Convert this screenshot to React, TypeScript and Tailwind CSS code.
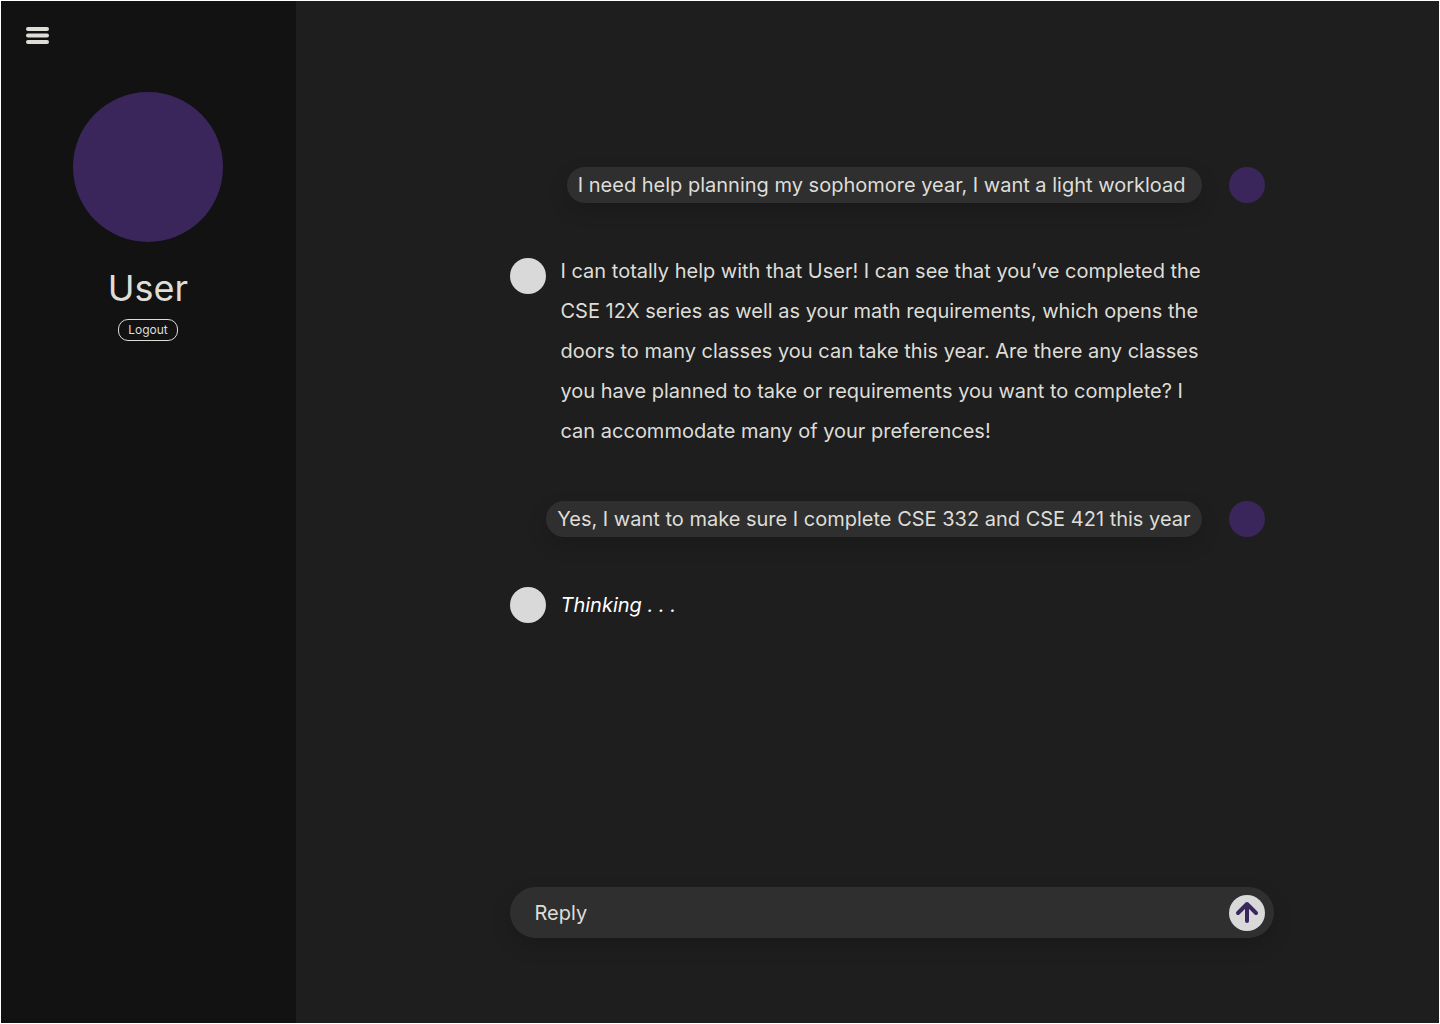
import React from "react";

const Avatar = ({ className }: { className: string }) => {
  return <div className={`h-9 w-9 shrink-0 rounded-full ${className}`} />;
};

const Sidebar = () => {
  return (
    <aside className="flex w-[295px] shrink-0 flex-col bg-[#121212] pr-px text-[#deddd8]">
      <button aria-label="Menu" className="mt-6 ml-6 h-6 w-6">
        <svg viewBox="0 0 24 24" className="h-6 w-6" fill="none" stroke="currentColor" strokeWidth="4" strokeLinecap="round">
          <path d="M3 4h19M3 10.5h19M3 17h19" />
        </svg>
      </button>
      <div className="mt-[43px] flex flex-col items-center">
        <div className="h-[150px] w-[150px] rounded-full bg-[#3a265a]" />
        <h1 className="mt-6 text-4xl leading-11">User</h1>
        <button className="mt-[9px] h-[22px] rounded-[10px] border border-[#deddd8] px-[9px] text-xs">
          Logout
        </button>
      </div>
    </aside>
  );
};

const UserMessage = ({ text, className }: { text: string; className: string }) => {
  return (
    <div className="flex w-full items-center justify-end gap-[27px] pr-[9px]">
      <p className={`rounded-full bg-[#2f2f2f] py-1 leading-7 shadow-[0_8px_20px_rgba(0,0,0,0.15)] ${className}`}>
        {text}
      </p>
      <Avatar className="bg-[#3a265a]" />
    </div>
  );
};

const ReplyForm = () => {
  return (
    <form className="flex h-[51px] w-full items-center rounded-full bg-[#2f2f2f] pr-[9px] pl-[25px] shadow-[0_8px_20px_rgba(0,0,0,0.15)]">
      <input
        type="text"
        aria-label="Reply"
        placeholder="Reply"
        className="min-w-0 flex-1 bg-transparent outline-none placeholder:text-[#deddd8]"
      />
      <button
        type="button"
        aria-label="Send"
        className="flex h-9 w-9 items-center justify-center rounded-full bg-[#d9d9d9] text-[#3a265a]"
      >
        <svg viewBox="0 0 24 24" className="h-6 w-6" fill="none" stroke="currentColor" strokeWidth="4" strokeLinecap="round" strokeLinejoin="round">
          <path d="M12 20V3M3 12l9-9 9 9" />
        </svg>
      </button>
    </form>
  );
};

const App = () => {
  return (
    <div className="flex min-h-screen border border-white bg-[#1e1e1e] font-['Inter',sans-serif]">
      <Sidebar />
      <main className="flex flex-1 flex-col items-center pt-[166px] pb-[85px] text-xl text-[#deddd8]">
        <div className="ml-12 flex w-[764px] flex-1 flex-col">
          <UserMessage
            text="I need help planning my sophomore year, I want a light workload"
            className="pr-4 pl-[11px]"
          />
          <div className="mt-12 flex gap-[15px]">
            <Avatar className="mt-[7px] bg-[#d9d9d9]" />
            <p className="w-[660px] leading-10">
              I can totally help with that User! I can see that you’ve completed
              the CSE 12X series as well as your math requirements, which opens
              the doors to many classes you can take this year. Are there any
              classes you have planned to take or requirements you want to
              complete? I can accommodate many of your preferences!
            </p>
          </div>
          <div className="mt-[50px]">
            <UserMessage
              text="Yes, I want to make sure I complete CSE 332 and CSE 421 this year"
              className="px-[11px]"
            />
          </div>
          <div className="mt-[50px] mb-12 flex items-center gap-[15px]">
            <Avatar className="bg-[#d9d9d9]" />
            <p className="text-white italic">Thinking . . .</p>
          </div>
          <div className="mt-auto">
            <ReplyForm />
          </div>
        </div>
      </main>
    </div>
  );
};

export default App;
